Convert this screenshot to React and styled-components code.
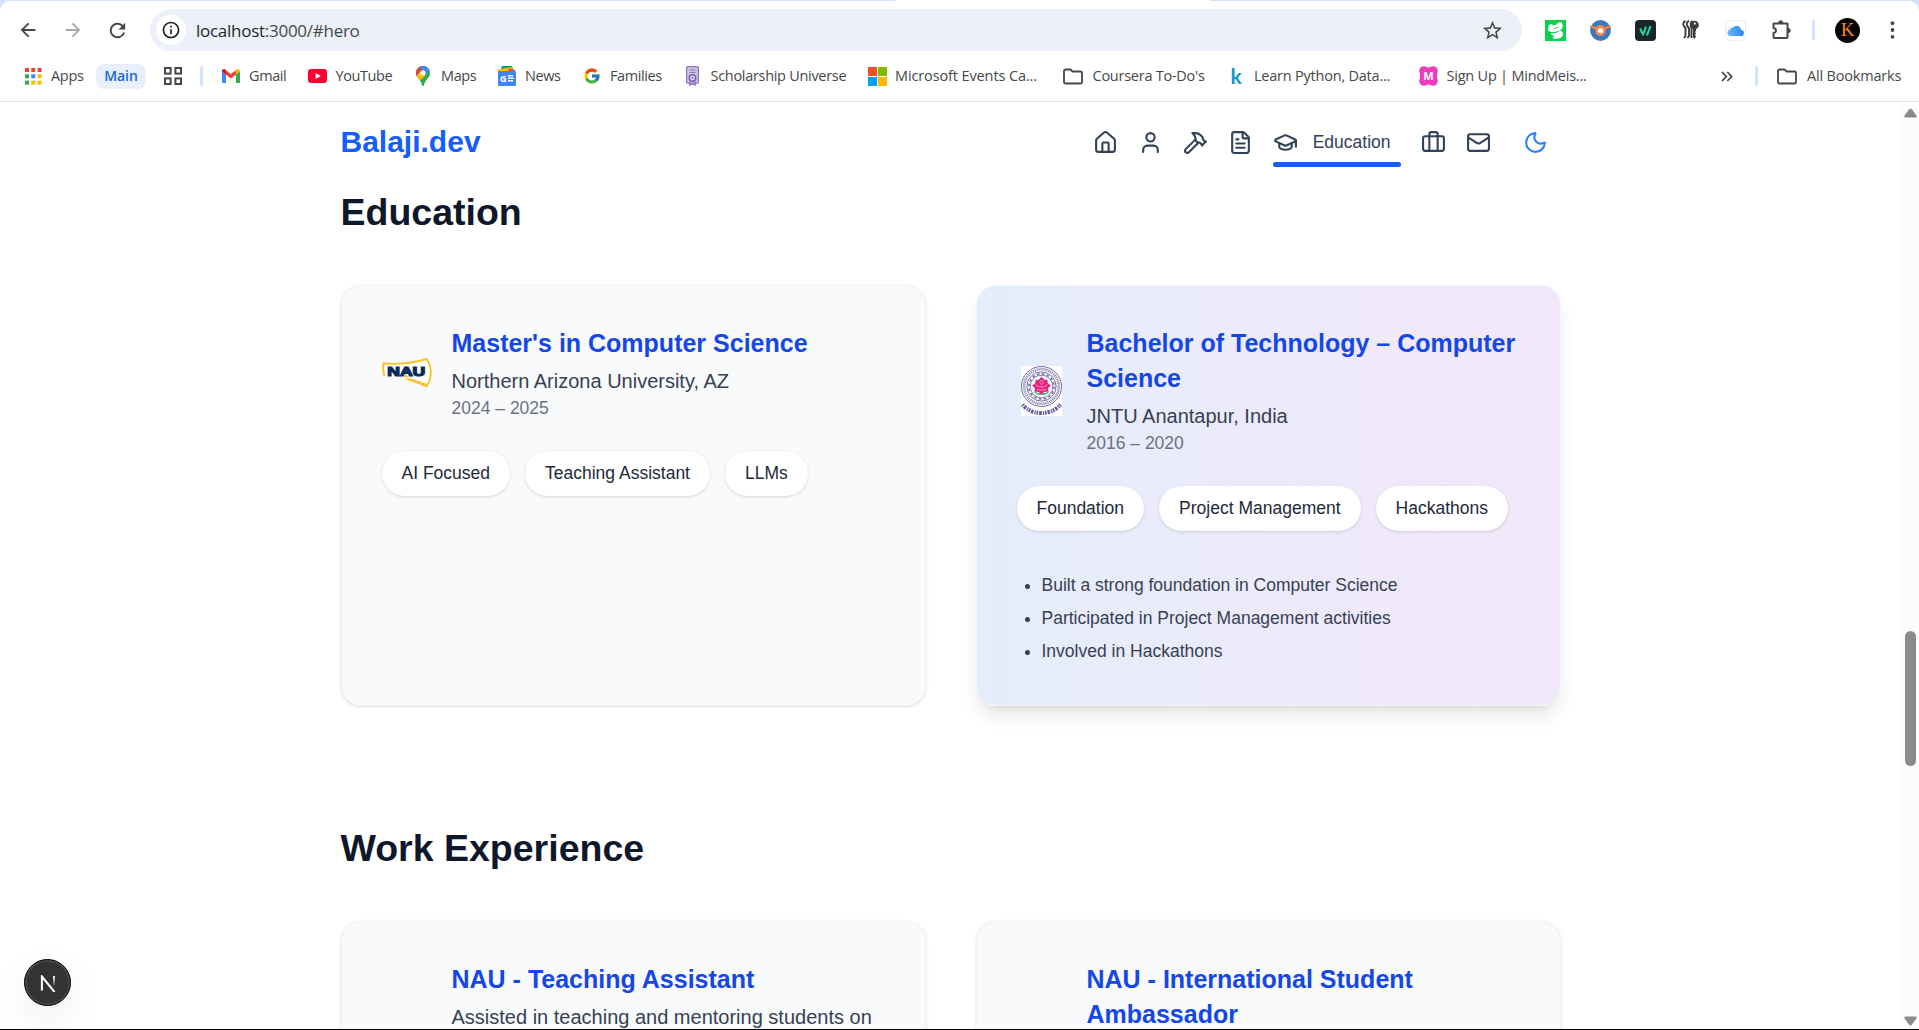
import React from "react";
import styled, { createGlobalStyle, css } from "styled-components";
import { House, User, Hammer, FileText, GraduationCap, Briefcase, Mail, Moon } from "lucide-react";
import { FcGoogle } from "react-icons/fc";
import { MdArrowBack, MdArrowForward, MdRefresh, MdStarBorder, MdInfoOutline } from "react-icons/md";

const GlobalStyle = createGlobalStyle`
  *, *::before, *::after { box-sizing: border-box; }
  body { margin: 0; background: #fff; overflow: hidden; }
  h1, h2, h3, p, ul { margin: 0; padding: 0; }
  svg { display: block; flex: none; }
`;

const uiFont = `"Open Sans", "Noto Sans", sans-serif`;
const pageFont = `"Liberation Sans", Arial, sans-serif`;

const Window = styled.div`
  display: flex;
  flex-direction: column;
  width: 1919px;
  height: 1030px;
  overflow: hidden;
  border-bottom: 1px solid #000;
  background: #fff;
`;

/* ---------- browser chrome ---------- */

const Chrome = styled.header`
  flex: none;
  height: 102px;
  padding-top: 1px;
  background: linear-gradient(90deg, #d3e3fd 0 895px, #fff 895px 1210px, #d3e3fd 1210px);
  border-bottom: 1px solid #dfe1e3;
  font-family: ${uiFont};
  color: #474747;
`;

const ChromeBody = styled.div`
  height: 100px;
  background: #fff;
  border-radius: 10px 10px 0 0;
`;

const Toolbar = styled.div`
  display: flex;
  align-items: center;
  height: 58px;
  padding-left: 5px;
`;

const ToolButton = styled.span`
  display: flex;
  align-items: center;
  justify-content: center;
  flex: none;
  width: 45px;
  color: ${(p) => (p.$muted ? "#a9a9a9" : "#444746")};
`;

const NavButtons = styled.div`
  display: flex;
  align-items: center;
  flex: none;
  width: 135px;
`;

const AddressBar = styled.div`
  display: flex;
  align-items: center;
  flex: none;
  width: 1372px;
  height: 42px;
  margin-left: 10px;
  padding: 0 18px 0 6px;
  border-radius: 21px;
  background: #ecf0f9;
`;

const SiteInfo = styled.span`
  display: flex;
  align-items: center;
  justify-content: center;
  width: 30px;
  height: 30px;
  border-radius: 50%;
  background: #fff;
  color: #1f1f1f;
`;

const Url = styled.span`
  flex: 1;
  padding-top: 1px;
  margin-left: 10px;
  font-size: 17px;
  letter-spacing: -0.27px;
  line-height: 24px;
  color: #474747;
  b { font-weight: 400; color: #1f1f1f; }
`;

const Extensions = styled.div`
  display: flex;
  align-items: center;
  flex: none;
  margin-left: 11px;
`;

const Divider = styled.span`
  flex: none;
  width: 3px;
  height: 20px;
  border-radius: 2px;
  background: #d3e3fd;
  margin: ${(p) => p.$margin || "0"};
`;

const Avatar = styled.span`
  display: flex;
  align-items: center;
  justify-content: center;
  flex: none;
  width: 25px;
  height: 25px;
  margin: 0 10px 0 20px;
  border-radius: 50%;
  background: #080302;
  color: #f58220;
  font: 19px "Liberation Serif", serif;
`;

const Bookmarks = styled.nav`
  display: flex;
  align-items: center;
  height: 34px;
  padding: 0 17px 0 23px;
  font-size: 14.5px;
  line-height: 20px;
`;

const BookmarkItem = styled.span`
  display: flex;
  align-items: center;
  flex: none;
  width: ${(p) => p.$width}px;
`;

const BookmarkIcon = styled.span`
  display: flex;
  align-items: center;
  justify-content: center;
  flex: none;
  width: 20px;
  height: 20px;
  margin-right: ${(p) => p.$gap || 8}px;
`;

const BookmarkLabel = styled.span`
  white-space: nowrap;
  letter-spacing: ${(p) => p.$spacing ?? -0.4}px;
`;

const GroupChip = styled.span`
  display: flex;
  align-items: center;
  justify-content: center;
  flex: none;
  width: 50px;
  height: 25px;
  margin-right: 18px;
  border-radius: 8px;
  background: #e8f0fe;
  color: #1a67d2;
  font-weight: 600;
  font-size: 14px;
  letter-spacing: -0.05px;
`;

const Spacer = styled.span`
  flex: 1;
`;

/* ---------- page ---------- */

const Viewport = styled.div`
  display: flex;
  flex: 1;
  min-height: 0;
`;

const Page = styled.div`
  flex: 1;
  min-width: 0;
  overflow: hidden;
  background: #fff;
  font-family: ${pageFont};
`;

const Container = styled.div`
  width: 1280px;
  margin: 0 auto;
  padding: 0 30px;
`;

const SiteHeader = styled(Container)`
  display: flex;
  align-items: center;
  justify-content: space-between;
  height: 80px;
`;

const Brand = styled.h1`
  font-size: 30px;
  line-height: 40px;
  font-weight: 700;
  color: #155dfc;
`;

const Menu = styled.nav`
  display: flex;
  align-items: center;
  color: #314158;
`;

const MenuList = styled.div`
  display: flex;
  align-items: center;
  gap: 20px;
`;

const ActiveLink = styled.a`
  display: grid;
  grid-template: 40px 5px / 25px auto;
  column-gap: 15px;
  align-items: center;
  padding-top: 5px;
`;

const ActiveLabel = styled.span`
  padding-right: 10px;
  font-size: 17.5px;
  line-height: 25px;
`;

const Underline = styled.span`
  grid-column: 1 / -1;
  height: 5px;
  border-radius: 3px;
  background: #155dfc;
`;

const ThemeToggle = styled.span`
  margin: 0 13px 0 32px;
  color: #2b7fff;
`;

const Section = styled.section`
  padding-bottom: 120px;
`;

const SectionTitle = styled.h2`
  margin-bottom: 50px;
  padding-top: ${(p) => p.$offset || 0}px;
  font-size: 37.5px;
  line-height: 45px;
  font-weight: 700;
  color: #0f172b;
`;

const Columns = styled.div`
  display: grid;
  grid-template-columns: 1fr 1fr;
  gap: 50px;
`;

const Card = styled.article`
  height: 421px;
  padding: 40px;
  border: 1px solid #f3f4f6;
  border-radius: 20px;
  background: #f9fafc;
  box-shadow: 0 1px 3.75px rgba(0, 0, 0, 0.1), 0 1px 2.5px -1px rgba(0, 0, 0, 0.1);
  ${(p) =>
    p.$highlighted &&
    css`
      margin-left: 0.5px;
      padding-left: 39.5px;
      padding-right: 38px;
      background: linear-gradient(90deg, #e4edfb 0%, #ebebfb 38%, #f1e8fa 85%, #f1e7fa 100%);
      box-shadow: 0 12.5px 18.75px -3.75px rgba(0, 0, 0, 0.1), 0 5px 7.5px -5px rgba(0, 0, 0, 0.1);
    `}
`;

const CardHead = styled.div`
  display: flex;
  align-items: center;
  gap: 20px;
`;

const Logo = styled.div`
  display: flex;
  align-items: center;
  justify-content: center;
  flex: none;
  width: 50px;
  height: 50px;
`;

const CardTitle = styled.h3`
  margin-bottom: 5px;
  font-size: 25px;
  line-height: 35px;
  font-weight: 700;
  color: #1447e6;
`;

const Subtitle = styled.p`
  font-size: 20px;
  line-height: 30px;
  color: #364153;
`;

const Period = styled.p`
  font-size: 17.5px;
  line-height: 25px;
  color: #6a7282;
`;

const Tags = styled.div`
  display: flex;
  gap: 15px;
  margin-top: 30px;
`;

const Tag = styled.span`
  padding: 10px 20px;
  border-radius: 23px;
  background: #fff;
  box-shadow: 0 1px 3.75px rgba(0, 0, 0, 0.1), 0 1px 2.5px -1px rgba(0, 0, 0, 0.1);
  font-size: 17.5px;
  line-height: 25px;
  color: #1e2939;
  white-space: nowrap;
`;

const Points = styled.ul`
  display: grid;
  gap: 5px;
  margin-top: 40px;
  padding-left: 25px;
  font-size: 17.5px;
  line-height: 28px;
  color: #364153;
`;

const Scrollbar = styled.div`
  display: flex;
  flex-direction: column;
  align-items: center;
  flex: none;
  width: 18px;
  padding: 6px 0 3px;
  background: #fcfcfc;
`;

const Thumb = styled.span`
  width: 11px;
  height: 135px;
  margin: 513px 0 auto;
  border-radius: 6px;
  background: #8b8b8b;
`;

const DevBadge = styled.div`
  position: fixed;
  left: 24px;
  bottom: 24px;
  display: flex;
  align-items: center;
  justify-content: center;
  width: 47px;
  height: 47px;
  padding: 1px 0 0 1px;
  border: 1px solid #000;
  border-radius: 50%;
  background: #333;
  box-shadow: inset 0 0 0 1.5px #4c4c4c, 0 15px 40px rgba(0, 0, 0, 0.07);
`;

/* ---------- drawings ---------- */

const AppsIcon = () => {
  const colors = ["#ea4335", "#ea4335", "#ea4335", "#34a853", "#4285f4", "#fbbc04", "#34a853", "#fbbc04", "#fbbc04"];
  return (
    <svg width="17" height="17" viewBox="0 0 17 17">
      {colors.map((c, i) => (
        <rect key={i} x={(i % 3) * 6.3} y={Math.floor(i / 3) * 6.3} width="4" height="4" fill={c} />
      ))}
    </svg>
  );
};

const GridIcon = () => (
  <svg width="18" height="18" viewBox="0 0 18 18" fill="none" stroke="#474747" strokeWidth="2">
    <rect x="1" y="1" width="5.6" height="5.6" />
    <rect x="11.4" y="1" width="5.6" height="5.6" />
    <rect x="1" y="11.4" width="5.6" height="5.6" />
    <rect x="11.4" y="11.4" width="5.6" height="5.6" />
  </svg>
);

const GmailIcon = () => (
  <svg width="18" height="14" viewBox="0 0 18 14">
    <path d="M0 2v11a1 1 0 0 0 1 1h3V5z" fill="#4285f4" />
    <path d="M18 2v11a1 1 0 0 1-1 1h-3V5z" fill="#34a853" />
    <path d="M14 1.2V5.6l4-3V1.6C18 .3 16.4-.5 15.200.3z" fill="#fbbc04" />
    <path d="M4 1.2V5.600L0 2.800V1.600C0 .3 1.600-.5 2.800.3z" fill="#c5221f" />
    <path d="M4 1.200 9 5l5-3.800v4.600L9 9.600 4 5.800z" fill="#ea4335" />
  </svg>
);

const YouTubeIcon = () => (
  <svg width="19" height="14" viewBox="0 0 19 14">
    <rect width="19" height="14" rx="3" fill="#ff0033" />
    <path d="M7.600 4v6l5.200-3z" fill="#fff" />
  </svg>
);

const MapsIcon = () => (
  <svg width="14" height="20" viewBox="0 0 14 20">
    <defs>
      <clipPath id="pin">
        <path d="M7 0a7 7 0 0 1 7 7c0 3-1.500 4.500-3.200 6.600C9.200 15.600 8.300 17.500 8 19.300c-.2 .9-1.800 .9-2 0-.3-1.800-1.200-3.700-2.800-5.700C1.500 11.500 0 10 0 7a7 7 0 0 1 7-7z" />
      </clipPath>
    </defs>
    <g clipPath="url(#pin)">
      <rect width="14" height="20" fill="#34a853" />
      <path d="M0 10 11 0H0z" fill="#1a73e8" />
      <path d="M-1 0h4.500L7 5 1 11z" fill="#ea4335" />
      <path d="M4 0h10v6L8 8z" fill="#4285f4" />
      <path d="M0 10.500 5 5l4.500 4.500L3.500 15z" fill="#fbbc04" />
    </g>
    <circle cx="7" cy="6.800" r="2.600" fill="#fff" />
  </svg>
);

const NewsIcon = () => (
  <svg width="18" height="20" viewBox="0 0 18 20">
    <path d="M4 0h10l1.500 5h-13z" fill="#0c9d58" />
    <path d="M0 3.500 14 1l1 5H0z" fill="#fbbc04" />
    <path d="m11 2.500 6 1.500v3h-7z" fill="#ea4335" />
    <rect y="5" width="18" height="15" rx="1" fill="#4285f4" />
    <text x="1.800" y="15.600" fontFamily="Open Sans, sans-serif" fontWeight="700" fontSize="9.500" fill="#fff">G</text>
    <path d="M10 9.700h5M10 12.200h6M10 14.700h5" stroke="#fff" strokeWidth="1.500" />
  </svg>
);

const ScholarshipIcon = () => (
  <svg width="13" height="20" viewBox="0 0 13 20">
    <rect x=".6" y=".6" width="11.800" height="16.500" rx="1" fill="#cfc3e4" stroke="#8e74bd" strokeWidth="1.200" />
    <path d="M3.500 4h6M3.500 6.500h6" stroke="#8e74bd" strokeWidth="1.200" />
    <circle cx="6.500" cy="12" r="3.200" fill="#e6dff2" stroke="#7d60b2" strokeWidth="1.500" />
    <circle cx="6.500" cy="12" r="1" fill="#7d60b2" />
    <path d="M4 15.500 3.500 19l3-1 3 1-.5-3.500" fill="none" stroke="#8e74bd" strokeWidth="1.300" />
  </svg>
);

const MicrosoftIcon = () => (
  <svg width="19" height="19" viewBox="0 0 19 19">
    <path d="M0 0h9v9H0z" fill="#f35022" />
    <path d="M10 0h9v9h-9z" fill="#80bb03" />
    <path d="M0 10h9v9H0z" fill="#03a5f0" />
    <path d="M10 10h9v9h-9z" fill="#ffba08" />
  </svg>
);

const FolderIcon = () => (
  <svg width="20" height="17" viewBox="0 0 20 17" fill="none" stroke="#474747" strokeWidth="1.800">
    <path d="M1 3a1.500 1.500 0 0 1 1.500-1.500h5l2 2h8A1.500 1.500 0 0 1 19 5v9a1.500 1.500 0 0 1-1.500 1.500h-15A1.500 1.500 0 0 1 1 14z" />
  </svg>
);

const KaggleMark = styled.span`
  padding-bottom: 1px;
  font: 700 21px/20px "Lato", sans-serif;
  color: #1296c8;
`;

const MindMeisterIcon = () => (
  <svg width="19" height="20" viewBox="0 0 19 20">
    <g fill="#ee3cc0">
      <circle cx="5" cy="5" r="4.800" />
      <circle cx="14" cy="5" r="4.800" />
      <circle cx="5" cy="15" r="4.800" />
      <circle cx="14" cy="15" r="4.800" />
      <rect x="1" y="4" width="17" height="12" />
      <rect x="4" y="1.500" width="11" height="17" />
    </g>
    <text x="9.500" y="14" textAnchor="middle" fontFamily="Open Sans, sans-serif" fontWeight="700" fontSize="11" fill="#fff">M</text>
  </svg>
);

const ChevronsIcon = () => (
  <svg width="12" height="11" viewBox="0 0 12 11" fill="none" stroke="#474747" strokeWidth="1.800">
    <path d="m1 1 4.300 4.500L1 10M6.300 1l4.300 4.500L6.300 10" />
  </svg>
);

const FrogIcon = () => (
  <svg width="21" height="21" viewBox="0 0 21 21">
    <rect width="21" height="21" fill="#0bd04b" />
    <g fill="#fff">
      <circle cx="6" cy="6.800" r="2.600" />
      <circle cx="14.800" cy="5" r="2.800" />
      <path d="M2.800 9.500C4 7 8 5 12 4.500l5.500 1.500c.5 2.500-1.500 4-4 5-3 1.200-6.500 1.500-9 .5-1.300-.5-2-1.200-1.700-2z" />
      <path d="M6 13c4 .5 7-.5 9.500-2.500 2.500 1 3.200 4 1.700 6-2.200 2.500-6.700 3-9.700 1.500 0-1 1.500-1.500 2.500-1.800-2-.2-4-1.200-4-3.200z" />
    </g>
    <path d="M8.500 9 13.500 7" stroke="#0bd04b" strokeWidth="1" />
  </svg>
);

const OrbitIcon = () => (
  <svg width="21" height="21" viewBox="0 0 21 21">
    <circle cx="10.500" cy="10.500" r="10.400" fill="#3b78bd" />
    <path d="M.5 6 6 8.500a5.500 5.500 0 0 1 9 0L20.500 6" fill="none" stroke="#f58345" strokeWidth="2.200" />
    <circle cx="10.500" cy="10.800" r="4" fill="#fff" stroke="#f58345" strokeWidth="2.600" />
  </svg>
);

const SlashIcon = () => (
  <svg width="21" height="21" viewBox="0 0 21 21">
    <rect width="21" height="21" rx="4" fill="#1b2428" />
    <path d="M5.200 8.500 7.300 13.500M7.800 15.500 11 6.500M12 15.500 15.500 6" fill="none" stroke="#14e0a1" strokeWidth="2" />
  </svg>
);

const KeysIcon = () => (
  <svg width="17" height="20" viewBox="0 0 17 20">
    <g fill="none" stroke="#3c3c3c" strokeWidth="1.900">
      <path d="M3.500 1C1 2 .5 5 2.500 7l1 1v8l-1.500 2M7 1C4.500 2 4 5 6 7l1 1v8l-1.500 2" />
      <path d="M10.500 1C8.500 2 8 5 9.500 7v11" />
    </g>
    <circle cx="12.500" cy="5" r="4.300" fill="#3c3c3c" />
    <circle cx="12.800" cy="3.600" r="1.100" fill="#fff" />
    <path d="M11 8h3v3l-1 1 1 1.500-1 1.500 1 1.500-1.500 2.500L11 17z" fill="#3c3c3c" />
  </svg>
);

const CloudIcon = () => (
  <svg width="21" height="21" viewBox="0 0 21 21">
    <defs>
      <linearGradient id="cloud" x1="0" x2="1">
        <stop offset="0" stopColor="#66bdf9" />
        <stop offset="1" stopColor="#2783f2" />
      </linearGradient>
    </defs>
    <rect x=".5" y=".5" width="20" height="20" rx="4" fill="#fff" stroke="#ececec" />
    <path d="M5.500 16a3.300 3.300 0 0 1-.5-6.500 2.700 2.700 0 0 1 3-2 4.500 4.500 0 0 1 8 2.500 3 3 0 0 1-.3 6z" fill="url(#cloud)" />
  </svg>
);

const PuzzleIcon = () => (
  <svg width="22" height="22" viewBox="0 0 22 22">
    <path d="M3.500 4.500h14v13.500a1 1 0 0 1-1 1h-12a1 1 0 0 1-1-1v-4c1.800-.3 2.500-1.300 2.500-2.500S5.300 9.300 3.500 9z" fill="none" stroke="#444746" strokeWidth="2" strokeLinejoin="round" />
    <path d="M8.500 4a2.200 2.200 0 0 1 4.400 0M18 9.300a2.200 2.200 0 0 1 0 4.400" fill="#444746" stroke="#444746" strokeWidth="1" />
  </svg>
);

const DotsIcon = () => (
  <svg width="5" height="18" viewBox="0 0 5 18" fill="#444746">
    <circle cx="2.500" cy="2.200" r="1.900" />
    <circle cx="2.500" cy="9" r="1.900" />
    <circle cx="2.500" cy="15.800" r="1.900" />
  </svg>
);

const NauLogo = () => (
  <svg width="50" height="32" viewBox="0 0 50 32">
    <path d="M2.400 18C1 13 .9 9 1.500 5.300c14.500 1.500 30-.3 43-4.300 5.500 8.500 5.500 18.500 0 27.500-5.500-3-11.500-5.500-18-7" fill="#fff" stroke="#fcc22d" strokeWidth="1.900" />
    <path d="m22 20.800 7-.3 16 5.500-.5 2.500z" fill="#fcc22d" />
    <text x="5.300" y="18.300" textLength="38" lengthAdjust="spacingAndGlyphs" fontFamily="Liberation Sans, Arial, sans-serif" fontWeight="700" fontSize="12.500" fill="#0b2b5c" stroke="#0b2b5c" strokeWidth="1.200">NAU</text>
    <path d="m21.500 19.500 2.500-3.500 3 3.500z" fill="#fcc22d" />
  </svg>
);

const JntuLogo = () => (
  <svg width="41" height="50" viewBox="0 0 41 50">
    <rect width="41" height="50" fill="#fff" />
    <g fill="none" stroke="#54488f">
      <circle cx="20.500" cy="20.500" r="20" strokeWidth=".8" />
      <circle cx="20.500" cy="20.500" r="17.300" strokeWidth="2.800" strokeDasharray="1.100 .9" opacity=".7" />
      <circle cx="20.500" cy="20.500" r="14.600" strokeWidth=".8" />
      <circle cx="20.500" cy="20.500" r="12.600" strokeWidth="1.600" strokeDasharray="2.600 2.340" opacity=".8" />
      <circle cx="20.500" cy="20.500" r="11.300" strokeWidth=".7" />
      <path d="M1.500 38.500c3.500 4.500 10 8.500 19 8.500s15.500-4 19-8.500" strokeWidth="4" strokeDasharray="1.600 1 2.600 1.100 1.200 .8" opacity=".9" />
    </g>
    <path d="M13 24c1.500 2.500 4 3.500 7.500 3.500s6-1 7.500-3.500l-.5 3-4 2h-6l-4-2z" fill="#4fb37a" />
    <path d="m20.500 10.500 2.800 3.300 3.200.2.300 3.300 3 2.200-2.500 2.500-.3 3.500-3.500.5-3 2.500-3-2.500-3.500-.5-.3-3.500-2.500-2.500 3-2.200.3-3.300 3.200-.2z" fill="#e5237f" />
    <path d="M14.500 18.500c2 2 4 2.500 6 2.500s4-.5 6-2.500M16 23.500c2 .8 7 .8 9 0M20.500 14l-2 2.500 2 2 2-2z" fill="none" stroke="#fbc9df" strokeWidth=".7" />
  </svg>
);

const NextMark = () => (
  <svg width="17" height="17" viewBox="0 0 17 17" fill="none">
    <defs>
      <linearGradient id="stem" x1="0" y1="0" x2="0" y2="1">
        <stop offset="0" stopColor="#fff" />
        <stop offset="1" stopColor="#fff" stopOpacity="0" />
      </linearGradient>
    </defs>
    <path d="M1.900 15.500V1.500L14.500 17" stroke="#fff" strokeWidth="2" />
    <rect x="13" y="1" width="2" height="10.500" fill="url(#stem)" />
  </svg>
);

const ScrollArrow = ({ down }) => (
  <svg width="13" height="10" viewBox="0 0 13 10" fill="#8b8b8b" transform={down ? "rotate(180)" : undefined}>
    <path d="M5.200 1.200a1.800 1.800 0 0 1 2.600 0l4.600 6.300c.6 1 .2 2-1 2H1.600c-1.200 0-1.600-1-1-2z" />
  </svg>
);

/* ---------- composition ---------- */

const bookmarks = [
  { label: "Gmail", icon: <GmailIcon />, width: 86.5 },
  { label: "YouTube", icon: <YouTubeIcon />, width: 105.5 },
  { label: "Maps", icon: <MapsIcon />, width: 84 },
  { label: "News", icon: <NewsIcon />, width: 85 },
  { label: "Families", icon: <FcGoogle size={18} />, width: 100.5 },
  { label: "Scholarship Universe", icon: <ScholarshipIcon />, width: 184.5, spacing: -0.3 },
  { label: "Microsoft Events Ca...", icon: <MicrosoftIcon />, width: 195.5, spacing: -0.12 },
  { label: "Coursera To-Do's", icon: <FolderIcon />, width: 163.5, gap: 10, spacing: -0.25 },
  { label: "Learn Python, Data...", icon: <KaggleMark>k</KaggleMark>, width: 192.5, spacing: -0.22 },
  { label: "Sign Up | MindMeis...", icon: <MindMeisterIcon />, width: 180, spacing: -0.22 },
];

const Bookmark = ({ label, icon, width, gap, spacing }) => (
  <BookmarkItem $width={width}>
    <BookmarkIcon $gap={gap}>{icon}</BookmarkIcon>
    <BookmarkLabel $spacing={spacing}>{label}</BookmarkLabel>
  </BookmarkItem>
);

const BrowserChrome = () => (
  <Chrome>
    <ChromeBody>
      <Toolbar>
        <NavButtons>
          <ToolButton><MdArrowBack size={22} /></ToolButton>
          <ToolButton $muted><MdArrowForward size={22} /></ToolButton>
          <ToolButton><MdRefresh size={23} /></ToolButton>
        </NavButtons>
        <AddressBar>
          <SiteInfo><MdInfoOutline size={20} /></SiteInfo>
          <Url><b>localhost</b>:3000/#hero</Url>
          <MdStarBorder size={23} color="#444746" />
        </AddressBar>
        <Extensions>
          <ToolButton><FrogIcon /></ToolButton>
          <ToolButton><OrbitIcon /></ToolButton>
          <ToolButton><SlashIcon /></ToolButton>
          <ToolButton><KeysIcon /></ToolButton>
          <ToolButton><CloudIcon /></ToolButton>
          <ToolButton><PuzzleIcon /></ToolButton>
        </Extensions>
        <Divider $margin="0 0 0 9px" />
        <Avatar>K</Avatar>
        <ToolButton><DotsIcon /></ToolButton>
      </Toolbar>
      <Bookmarks>
        <Bookmark label="Apps" icon={<AppsIcon />} width={73} spacing={-0.3} />
        <GroupChip>Main</GroupChip>
        <GridIcon />
        <Divider $margin="0 18px 0 18px" />
        {bookmarks.map((b) => (
          <Bookmark key={b.label} {...b} />
        ))}
        <Spacer />
        <ChevronsIcon />
        <Divider $margin="0 19px 0 22px" />
        <Bookmark label="All Bookmarks" icon={<FolderIcon />} width={125} gap={10} spacing={-0.18} />
      </Bookmarks>
    </ChromeBody>
  </Chrome>
);

const EducationCard = ({ highlighted, logo, title, school, period, tags, points }) => (
  <Card $highlighted={highlighted}>
    <CardHead>
      <Logo>{logo}</Logo>
      <div>
        <CardTitle>{title}</CardTitle>
        <Subtitle>{school}</Subtitle>
        <Period>{period}</Period>
      </div>
    </CardHead>
    <Tags>
      {tags.map((t) => (
        <Tag key={t}>{t}</Tag>
      ))}
    </Tags>
    {points && (
      <Points>
        {points.map((p) => (
          <li key={p}>{p}</li>
        ))}
      </Points>
    )}
  </Card>
);

const WorkCard = ({ title, text }) => (
  <Card>
    <CardHead>
      <Logo />
      <div>
        <CardTitle>{title}</CardTitle>
        <Subtitle>{text}</Subtitle>
      </div>
    </CardHead>
  </Card>
);

export default function App() {
  return (
    <>
      <GlobalStyle />
      <Window>
        <BrowserChrome />
        <Viewport>
          <Page>
            <SiteHeader>
              <Brand>Balaji.dev</Brand>
              <Menu>
                <MenuList>
                  <House size={25} />
                  <User size={25} />
                  <Hammer size={25} />
                  <FileText size={25} />
                  <ActiveLink>
                    <GraduationCap size={25} />
                    <ActiveLabel>Education</ActiveLabel>
                    <Underline />
                  </ActiveLink>
                  <Briefcase size={25} />
                  <Mail size={25} />
                </MenuList>
                <ThemeToggle><Moon size={25} /></ThemeToggle>
              </Menu>
            </SiteHeader>
            <Container>
              <Section>
                <SectionTitle $offset={8}>Education</SectionTitle>
                <Columns>
                  <EducationCard
                    logo={<NauLogo />}
                    title="Master's in Computer Science"
                    school="Northern Arizona University, AZ"
                    period="2024 – 2025"
                    tags={["AI Focused", "Teaching Assistant", "LLMs"]}
                  />
                  <EducationCard
                    highlighted
                    logo={<JntuLogo />}
                    title="Bachelor of Technology – Computer Science"
                    school="JNTU Anantapur, India"
                    period="2016 – 2020"
                    tags={["Foundation", "Project Management", "Hackathons"]}
                    points={[
                      "Built a strong foundation in Computer Science",
                      "Participated in Project Management activities",
                      "Involved in Hackathons",
                    ]}
                  />
                </Columns>
              </Section>
              <Section>
                <SectionTitle>Work Experience</SectionTitle>
                <Columns>
                  <WorkCard title="NAU - Teaching Assistant" text="Assisted in teaching and mentoring students on" />
                  <WorkCard title="NAU - International Student Ambassador" />
                </Columns>
              </Section>
            </Container>
          </Page>
          <Scrollbar>
            <ScrollArrow />
            <Thumb />
            <ScrollArrow down />
          </Scrollbar>
        </Viewport>
      </Window>
      <DevBadge><NextMark /></DevBadge>
    </>
  );
}
